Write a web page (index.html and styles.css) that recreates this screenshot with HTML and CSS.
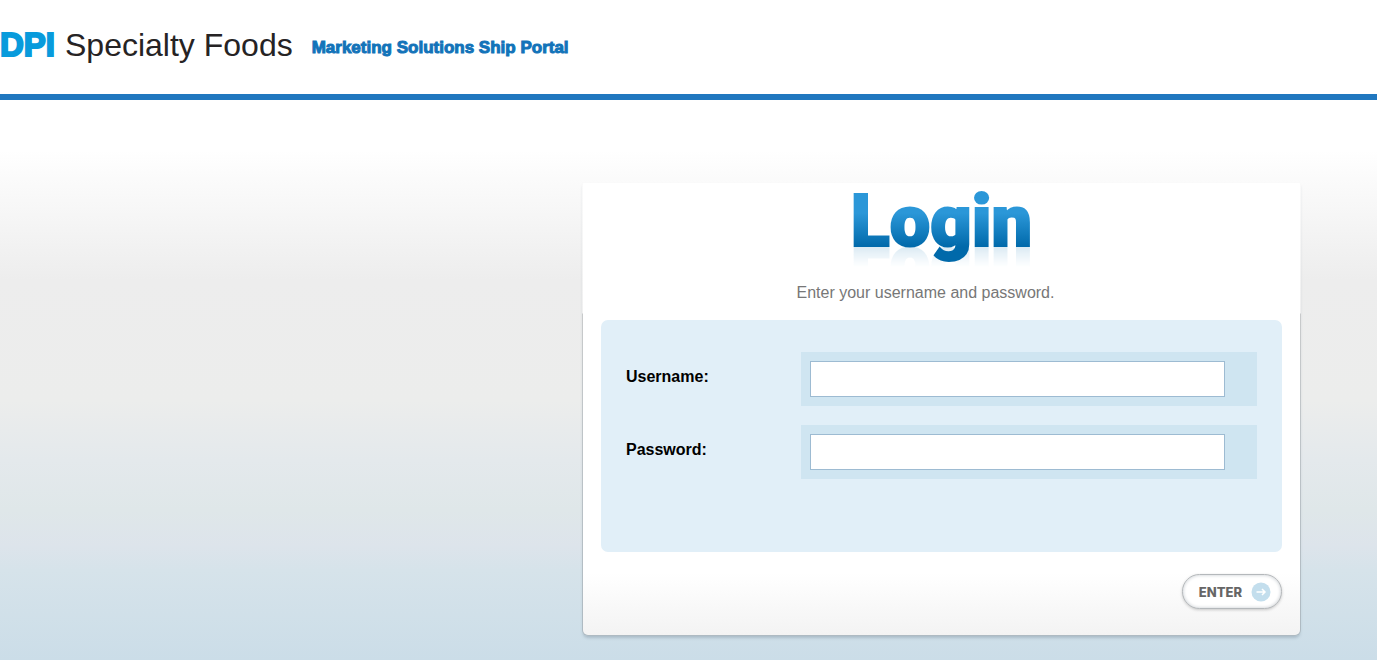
FILE: index.html
```html
<!DOCTYPE html>
<html lang="en">
<head>
    <meta charset="UTF-8">
    <meta name="viewport" content="width=device-width, initial-scale=1.0">
    <title>DPI Specialty Foods - Login</title>
    <link rel="stylesheet" href="styles.css">
</head>
<body>
    <header class="header">
        <div class="logo"><span class="logo-dpi">DPI</span> <span class="logo-name">Specialty Foods</span></div>
        <div class="tagline">Marketing Solutions Ship Portal</div>
    </header>

    <main class="content">
        <form class="login">
            <h1 class="login-title">Login</h1>
            <p class="login-text">Enter your username and password.</p>

            <div class="fields">
                <div class="field">
                    <label for="username">Username:</label>
                    <div class="field-box">
                        <input type="text" id="username" name="username">
                    </div>
                </div>
                <div class="field">
                    <label for="password">Password:</label>
                    <div class="field-box">
                        <input type="password" id="password" name="password">
                    </div>
                </div>
            </div>

            <div class="actions">
                <button type="submit" class="enter">
                    ENTER
                    <svg width="20" height="20" viewBox="0 0 20 20" aria-hidden="true">
                        <circle cx="10" cy="10" r="9.5" fill="#c3deed"/>
                        <path d="M5.5 10h8.5M11 7l3 3-3 3" fill="none" stroke="#fff" stroke-width="1.5"/>
                    </svg>
                </button>
            </div>
        </form>
    </main>
</body>
</html>
```

FILE: styles.css
```css
* {
    box-sizing: border-box;
}

body {
    margin: 0;
    min-height: 100vh;
    font-family: "Liberation Sans", Arial, sans-serif;
    font-size: 16px;
    background: linear-gradient(#fff 150px, #ededed 280px, #ecedec 400px, #e4e9ec 460px, #dfe7e9 510px, #dde4eb 545px, #d6e3ea 570px, #cbdde8 660px);
}

.header {
    display: flex;
    align-items: center;
    gap: 19px;
    height: 100px;
    background: #fff;
    border-bottom: 6px solid #2077bf;
}

.logo {
    display: flex;
    align-items: baseline;
    gap: 10px;
    padding-bottom: 4px;
    font-size: 32px;
    color: #262324;
    white-space: nowrap;
}

.logo-dpi {
    font-size: 33px;
    font-weight: bold;
    color: #089bdc;
    -webkit-text-stroke: 2px #089bdc;
}

.tagline {
    padding-top: 2px;
    font-size: 17px;
    font-weight: bold;
    color: #1273b9;
    -webkit-text-stroke: 1px #1273b9;
}

.content {
    display: flex;
    justify-content: flex-end;
    padding: 82px 76px 24px;
}

/* side borders only start below the heading area */
.login {
    width: 100%;
    max-width: 719px;
    padding: 0 18px 26px;
    border: 1px solid transparent;
    border-radius: 2px 2px 6px 6px;
    background: linear-gradient(#fff 390px, #f3f3f3) padding-box,
        linear-gradient(#fafafa, #f0f0f0 131px, #c8cacb 132px, #aebac2) border-box;
    box-shadow: 0 3px 3px -1px rgba(90, 110, 125, 0.3);
}

.login-title {
    width: fit-content;
    height: 84px;
    margin: 0 auto;
    font-family: Roboto, sans-serif;
    font-size: 72px;
    font-weight: 900;
    line-height: 78px;
    color: transparent;
    background: linear-gradient(#2b97d8 30px, #0069aa 64px);
    -webkit-background-clip: text;
    background-clip: text;
    -webkit-text-stroke: 2px transparent;
    -webkit-box-reflect: below -40px linear-gradient(transparent 44px, rgba(0, 0, 0, 0.14) 64px, transparent 64px);
}

.login-text {
    margin: 16px 32px 17px 0;
    line-height: 20px;
    text-align: center;
    color: #777;
}

.fields {
    display: flex;
    flex-direction: column;
    gap: 19px;
    min-height: 232px;
    padding: 32px 25px;
    border-radius: 7px;
    background: #e1eff8;
}

.field {
    display: flex;
}

.field label {
    width: 175px;
    padding-top: 16px;
    font-weight: bold;
    line-height: 18px;
    color: #000;
}

.field-box {
    flex: 1;
    padding: 9px 32px 9px 9px;
    background: #cfe5f1;
}

.field-box input {
    display: block;
    width: 100%;
    height: 36px;
    padding: 0 8px;
    font: inherit;
    border: 1px solid #9dbbd2;
    background: #fff;
}

.actions {
    display: flex;
    justify-content: flex-end;
    padding-top: 22px;
}

.enter {
    display: flex;
    align-items: center;
    gap: 9px;
    height: 35px;
    padding: 0 10px 0 16px;
    font-family: Inter, sans-serif;
    font-size: 13px;
    font-weight: 800;
    color: #666;
    border: 1px solid #b4b8bb;
    border-radius: 18px;
    background: #fff;
    box-shadow: inset 0 0 3px 1px #dcdfe2, 0 1px 3px rgba(0, 0, 0, 0.2);
    cursor: pointer;
}
```
